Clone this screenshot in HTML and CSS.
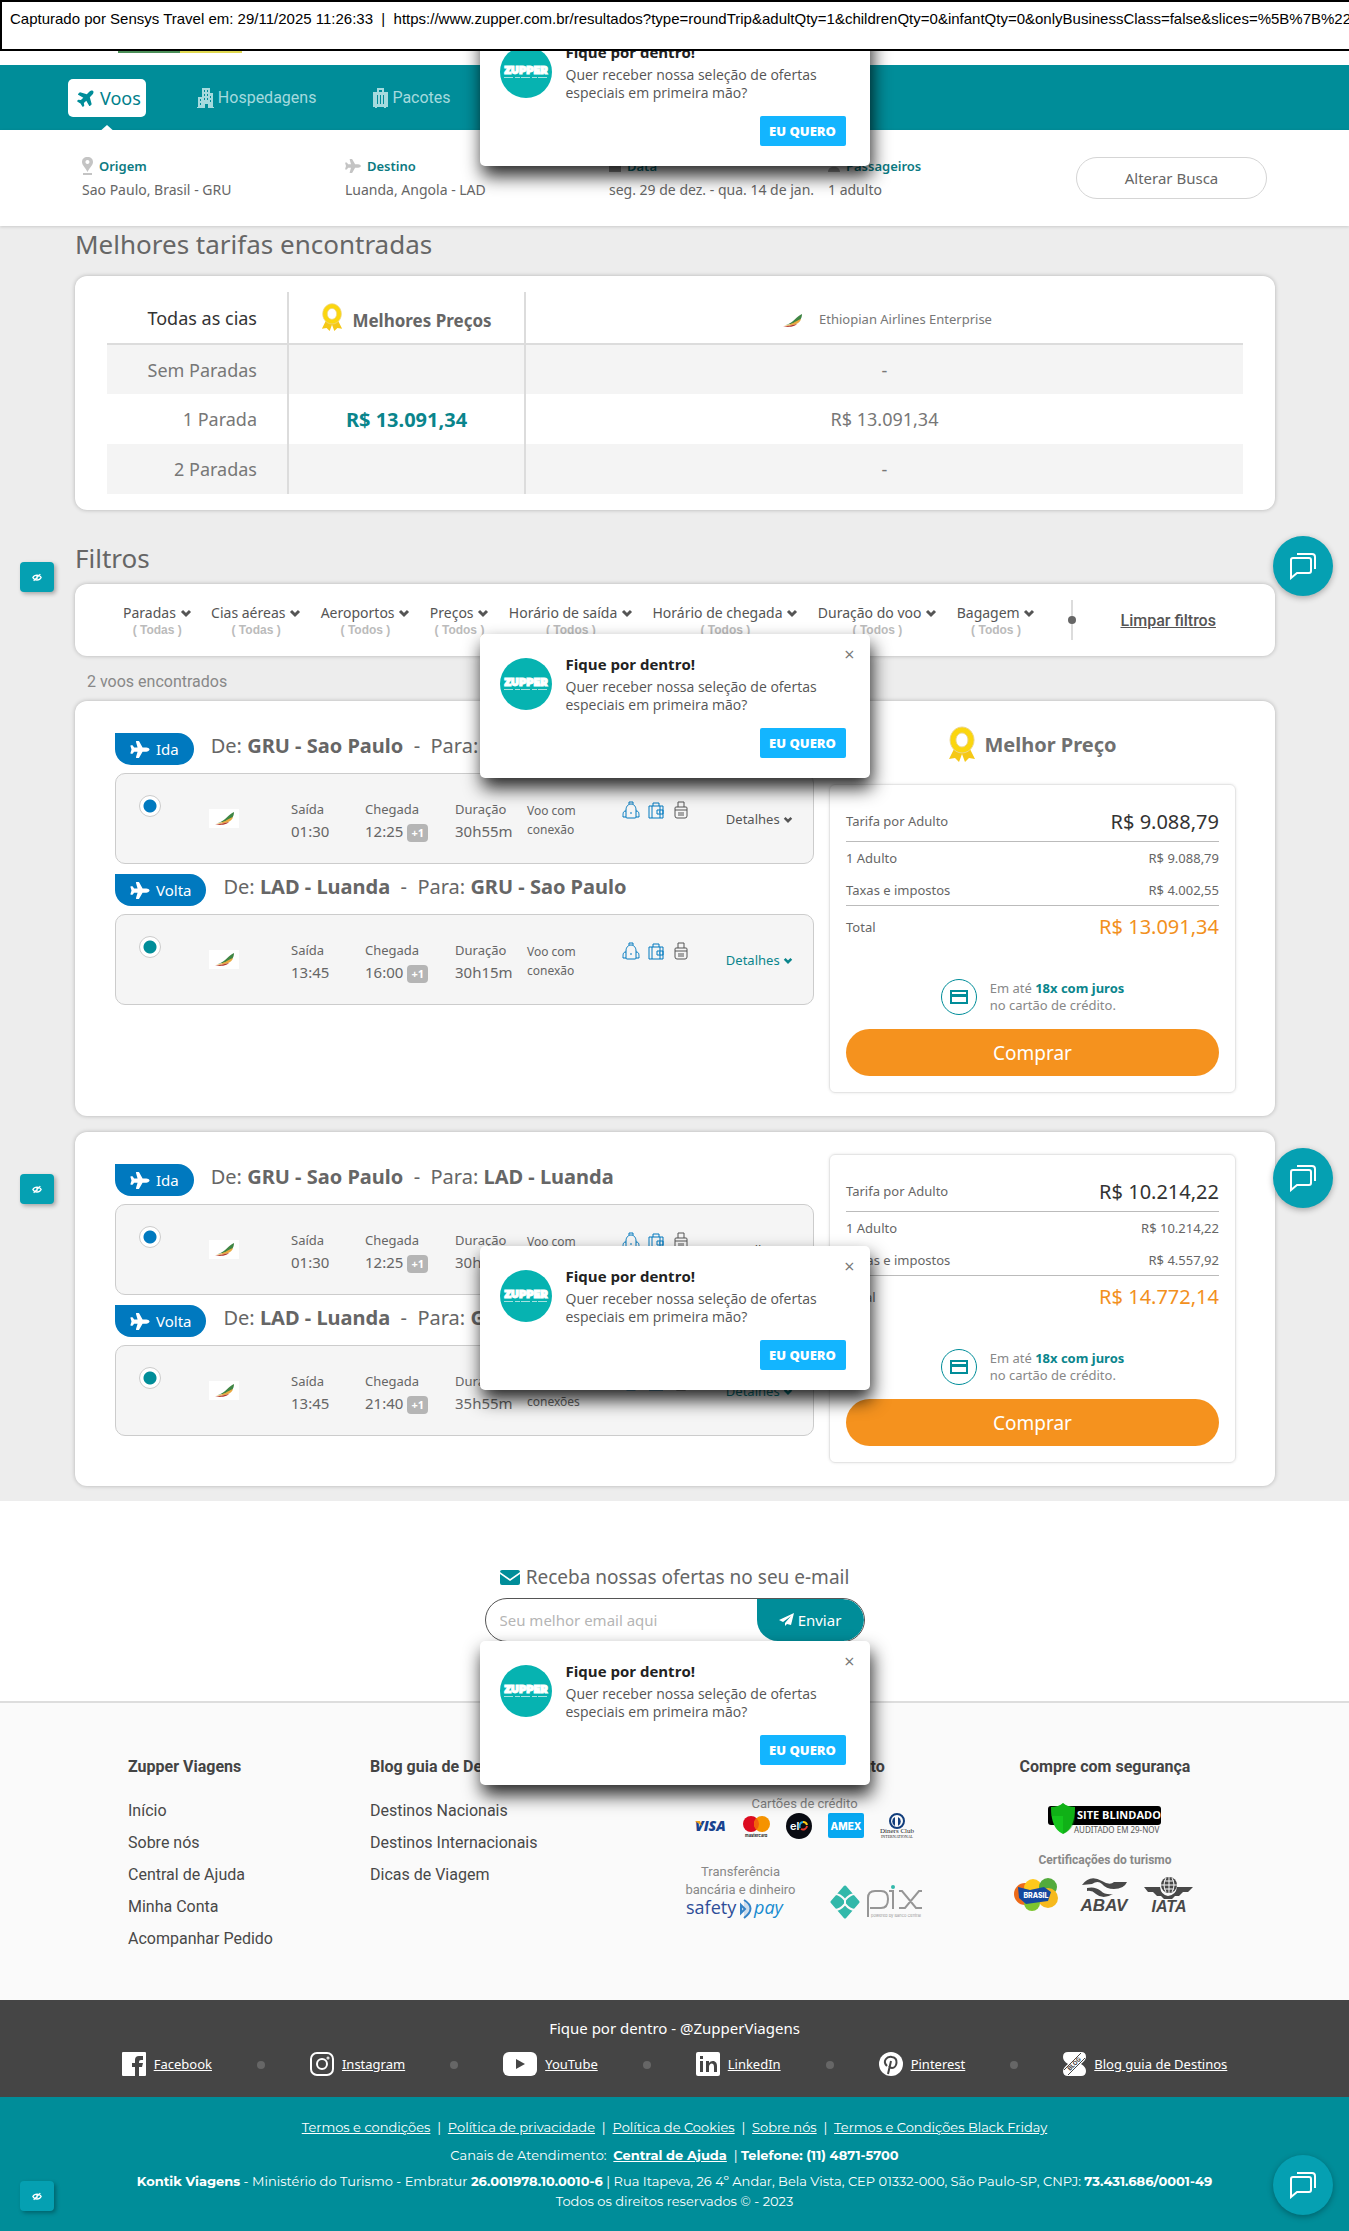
FILE: index.html
```
<!DOCTYPE html>
<html lang="pt-BR">

<head>
    <meta charset="utf-8">
    <title>Zupper Viagens - Resultados</title>
    <link rel="stylesheet" href="styles.css">
</head>

<body>
    <!-- shared icons -->
    <svg class="sprite" aria-hidden="true">
        <symbol id="plane" viewBox="0 0 576 512">
            <path d="M480 192H365.7L260.600 8.100A16 16 0 0 0 246.700 0h-65.500c-10.600 0-18.300 10.200-15.400 20.400L214.900 192H112l-43.200-57.600c-3-4-7.800-6.400-12.800-6.400H16C5.600 128-2 137.800.5 147.900L32 256 .5 364.100C-2 374.200 5.600 384 16 384h40c5 0 9.800-2.400 12.800-6.400L112 320h102.900l-49 171.600c-3 10.200 4.700 20.400 15.300 20.400h65.500c5.700 0 11-3.100 13.900-8.100L365.700 320H480c35.300 0 96-28.700 96-64s-60.700-64-96-64z" />
        </symbol>
        <symbol id="chevron" viewBox="0 0 12 9">
            <path d="M2 2l4 4 4-4" fill="none" stroke="currentColor" stroke-width="3" />
        </symbol>
        <symbol id="medal" viewBox="0 0 28 36">
            <path d="M6 23L1 33l6-1 4 4 3-8 3 8 4-4 6 1-5-10z" fill="#f5c816" />
            <path d="M14 1a12 13 0 1 0 .1 0zM14 7a6 7 0 1 1-.1 0z" fill="#fbd60e" fill-rule="evenodd" stroke="#ecd58a" />
        </symbol>
        <symbol id="tail" viewBox="0 0 30 19">
            <path fill="#fff" d="M0 0h30v19H0z" />
            <path d="M25 3c0 3-1 5-2 6C18 13 13 13 9 14c7-2 11-9 16-11z" fill="#3f8544" />
            <path d="M24 8c-1 5-9 7-17 7 7-1 12-5 17-7z" fill="#e9a840" />
            <path d="M20 13c-3 3-8 3-14 3 5-1 10-2 14-3z" fill="#b2362b" />
        </symbol>
        <symbol id="backpack" viewBox="0 0 18 18">
            <path d="M7 3V1h4v2M4 9c0-8 10-8 10 0v7q0 1-1 1H5q-1 0-1-1zM4 10c-3 0-3 2-3 6h3M14 10c3 0 3 2 3 6h-3M8 12h2" fill="none" stroke="currentColor" />
        </symbol>
        <symbol id="suitcase" viewBox="0 0 18 18">
            <path d="M2 5h14v12H2zM6 5V2h6v3M5 5v12M13 5v12M10 9h6v4h-6zM12 11h1" fill="none" stroke="currentColor" />
        </symbol>
        <symbol id="luggage" viewBox="0 0 18 18">
            <path d="M6 6V1h6v5M4 6h10q1 0 1 1v8q0 2-2 2H5q-2 0-2-2V7q0-1 1-1zM3 9h12M7 11v4M9 11v4M11 11v4" fill="none" stroke="currentColor" />
        </symbol>
        <symbol id="card" viewBox="0 0 18 14">
            <path d="M1 1h16v12H1z" fill="none" stroke="currentColor" stroke-width="2" />
            <path d="M1 4h16v3H1z" fill="currentColor" />
        </symbol>
        <symbol id="chat" viewBox="0 0 28 28">
            <path d="M2 8q0-2 2-2h16q2 0 2 2v11q0 2-2 2H8l-6 5zM8 2h15q3 0 3 3v12" fill="none" stroke="#fff" stroke-width="2" />
        </symbol>
        <symbol id="eye" viewBox="0 0 12 10">
            <path d="M1 5c2-4 8-4 10 0-2 4-8 4-10 0zM2 9l8-8M6 3v4" fill="none" stroke="#fff" stroke-width="1.500" />
        </symbol>
        <symbol id="zupper" viewBox="0 0 52 52">
            <circle cx="26" cy="26" r="26" fill="#06b3b1" />
            <text x="26" y="28" text-anchor="middle" font-family="Montserrat, Inter, sans-serif" font-weight="900" font-size="10" fill="#fff" stroke="#fff">ZUPPER</text>
            <path d="M4 31.500h44" stroke="#a5e2e0" stroke-dasharray="9 2 5 1" />
        </symbol>
    </svg>

    <div class="capture">Capturado por Sensys Travel em: 29/11/2025 11:26:33 &nbsp;|&nbsp; https://www.zupper.com.br/resultados?type=roundTrip&amp;adultQty=1&amp;childrenQty=0&amp;infantQty=0&amp;onlyBusinessClass=false&amp;slices=%5B%7B%22de</div>

    <header>
        <div class="logo-strip"><span></span></div>
        <nav>
            <a href="#" class="tab active">
                <svg class="plane-up" width="19" height="19"><use href="#plane" /></svg>Voos</a>
            <a href="#" class="tab">
                <svg width="17" height="20" viewBox="0 0 17 20" fill="currentColor">
                    <path fill-rule="evenodd" d="M5 0h8v5h3v14h1v1h-6v-4H8v4H0v-1h1V9h4zM7 2v2h1V2zM10 2v2h1V2zM7 6v2h1V6zM10 6v2h1V6zM7 10v2h1v-2zM10 10v2h1v-2zM13 8v2h1V8zM13 12v2h1v-2zM3 11v2h1v-2zM3 15v2h1v-2z" />
                </svg>Hospedagens</a>
            <a href="#" class="tab">
                <svg width="15" height="20" viewBox="0 0 15 20" fill="currentColor">
                    <path fill-rule="evenodd" d="M4 0h7v4h4v15h-2v1h-2v-1H4v1H2v-1H0V4h4zM6 2v2h3V2zM4 7v9h1V7zM7 7v9h1V7zM10 7v9h1V7z" />
                </svg>Pacotes</a>
        </nav>
        <section class="search">
            <div class="field">
                <h4><svg width="11" height="18" viewBox="0 0 11 18"><path fill="#c4c4c4" fill-rule="evenodd" d="M5.500 0C2 0 0 2 0 5c0 3 3 5 5.500 10C8 10 11 8 11 5c0-3-2-5-5.500-5zm0 3a2 2 0 1 1-.1 0zM1 16h9v2H1z" /></svg>Origem</h4>
                <p>Sao Paulo, Brasil - GRU</p>
            </div>
            <div class="field">
                <h4><svg width="16" height="14" fill="#c4c4c4"><use href="#plane" /></svg>Destino</h4>
                <p>Luanda, Angola - LAD</p>
            </div>
            <div class="field">
                <h4><svg width="12" height="12"><path fill="#999" d="M0 1h12v11H0z" /></svg>Data</h4>
                <p>seg. 29 de dez. - qua. 14 de jan.</p>
            </div>
            <div class="field">
                <h4><svg width="12" height="12"><path fill="#aaa" d="M0 12c0-7 12-7 12 0zM6 0a3 3 0 1 1-.1 0z" /></svg>Passageiros</h4>
                <p>1 adulto</p>
            </div>
            <button class="change">Alterar Busca</button>
        </section>
    </header>

    <main>
        <h2>Melhores tarifas encontradas</h2>
        <div class="panel fares">
            <table>
                <tr>
                    <th>Todas as cias</th>
                    <th class="best"><svg width="22" height="28"><use href="#medal" /></svg>Melhores Preços</th>
                    <th class="airline"><svg width="30" height="19"><use href="#tail" /></svg>Ethiopian Airlines Enterprise</th>
                </tr>
                <tr>
                    <td>Sem Paradas</td>
                    <td></td>
                    <td>-</td>
                </tr>
                <tr>
                    <td>1 Parada</td>
                    <td class="low">R$ 13.091,34</td>
                    <td>R$ 13.091,34</td>
                </tr>
                <tr>
                    <td>2 Paradas</td>
                    <td></td>
                    <td>-</td>
                </tr>
            </table>
        </div>

        <h2 class="filter-title">Filtros</h2>
        <div class="panel filters">
            <button class="filter"><span>Paradas <svg width="12" height="9"><use href="#chevron" /></svg></span><small>( Todas )</small></button>
            <button class="filter"><span>Cias aéreas <svg width="12" height="9"><use href="#chevron" /></svg></span><small>( Todas )</small></button>
            <button class="filter"><span>Aeroportos <svg width="12" height="9"><use href="#chevron" /></svg></span><small>( Todos )</small></button>
            <button class="filter"><span>Preços <svg width="12" height="9"><use href="#chevron" /></svg></span><small>( Todos )</small></button>
            <button class="filter"><span>Horário de saída <svg width="12" height="9"><use href="#chevron" /></svg></span><small>( Todos )</small></button>
            <button class="filter"><span>Horário de chegada <svg width="12" height="9"><use href="#chevron" /></svg></span><small>( Todos )</small></button>
            <button class="filter"><span>Duração do voo <svg width="12" height="9"><use href="#chevron" /></svg></span><small>( Todos )</small></button>
            <button class="filter"><span>Bagagem <svg width="12" height="9"><use href="#chevron" /></svg></span><small>( Todos )</small></button>
            <i class="divider"></i>
            <a href="#" class="clear">Limpar filtros</a>
        </div>
        <p class="count">2 voos encontrados</p>

        <article class="panel result first">
            <div class="legs">
                <div class="leg-title"><span class="badge"><svg width="20" height="17"><use href="#plane" /></svg>Ida</span>
                    <h3>De: <b>GRU - Sao Paulo</b> &nbsp;-&nbsp; Para: <b>LAD - Luanda</b></h3>
                </div>
                <div class="leg">
                    <input type="radio" name="ida1" aria-label="Selecionar ida" checked>
                    <svg class="tail" width="30" height="19"><use href="#tail" /></svg>
                    <div class="time dep"><span>Saída</span>01:30</div>
                    <div class="time arr"><span>Chegada</span>12:25 <em>+1</em></div>
                    <div class="time dur"><span>Duração</span>30h55m</div>
                    <p class="stops">Voo com<br>conexão</p>
                    <div class="bags"><svg><use href="#backpack" /></svg><svg><use href="#suitcase" /></svg><svg><use href="#luggage" /></svg></div>
                    <a href="#" class="details">Detalhes <svg width="10" height="8"><use href="#chevron" /></svg></a>
                </div>
                <div class="leg-title"><span class="badge"><svg width="20" height="17"><use href="#plane" /></svg>Volta</span>
                    <h3>De: <b>LAD - Luanda</b> &nbsp;-&nbsp; Para: <b>GRU - Sao Paulo</b></h3>
                </div>
                <div class="leg back">
                    <input type="radio" name="volta1" aria-label="Selecionar volta" checked>
                    <svg class="tail" width="30" height="19"><use href="#tail" /></svg>
                    <div class="time dep"><span>Saída</span>13:45</div>
                    <div class="time arr"><span>Chegada</span>16:00 <em>+1</em></div>
                    <div class="time dur"><span>Duração</span>30h15m</div>
                    <p class="stops">Voo com<br>conexão</p>
                    <div class="bags"><svg><use href="#backpack" /></svg><svg><use href="#suitcase" /></svg><svg><use href="#luggage" /></svg></div>
                    <a href="#" class="details">Detalhes <svg width="10" height="8"><use href="#chevron" /></svg></a>
                </div>
            </div>
            <aside>
                <h3 class="best-price"><svg width="28" height="36"><use href="#medal" /></svg>Melhor Preço</h3>
                <div class="price">
                    <dl>
                        <div class="big line"><dt>Tarifa por Adulto</dt><dd>R$ 9.088,79</dd></div>
                        <div><dt>1 Adulto</dt><dd>R$ 9.088,79</dd></div>
                        <div class="line"><dt>Taxas e impostos</dt><dd>R$ 4.002,55</dd></div>
                        <div class="big total"><dt>Total</dt><dd>R$ 13.091,34</dd></div>
                    </dl>
                    <div class="credit"><span class="ring"><svg width="18" height="14"><use href="#card" /></svg></span>
                        <p>Em até <b>18x com juros</b><br>no cartão de crédito.</p>
                    </div>
                    <button class="buy">Comprar</button>
                </div>
            </aside>
        </article>

        <article class="panel result">
            <div class="legs">
                <div class="leg-title"><span class="badge"><svg width="20" height="17"><use href="#plane" /></svg>Ida</span>
                    <h3>De: <b>GRU - Sao Paulo</b> &nbsp;-&nbsp; Para: <b>LAD - Luanda</b></h3>
                </div>
                <div class="leg">
                    <input type="radio" name="ida2" aria-label="Selecionar ida" checked>
                    <svg class="tail" width="30" height="19"><use href="#tail" /></svg>
                    <div class="time dep"><span>Saída</span>01:30</div>
                    <div class="time arr"><span>Chegada</span>12:25 <em>+1</em></div>
                    <div class="time dur"><span>Duração</span>30h55m</div>
                    <p class="stops">Voo com<br>conexão</p>
                    <div class="bags"><svg><use href="#backpack" /></svg><svg><use href="#suitcase" /></svg><svg><use href="#luggage" /></svg></div>
                    <a href="#" class="details">Detalhes <svg width="10" height="8"><use href="#chevron" /></svg></a>
                </div>
                <div class="leg-title"><span class="badge"><svg width="20" height="17"><use href="#plane" /></svg>Volta</span>
                    <h3>De: <b>LAD - Luanda</b> &nbsp;-&nbsp; Para: <b>GRU - Sao Paulo</b></h3>
                </div>
                <div class="leg back">
                    <input type="radio" name="volta2" aria-label="Selecionar volta" checked>
                    <svg class="tail" width="30" height="19"><use href="#tail" /></svg>
                    <div class="time dep"><span>Saída</span>13:45</div>
                    <div class="time arr"><span>Chegada</span>21:40 <em>+1</em></div>
                    <div class="time dur"><span>Duração</span>35h55m</div>
                    <p class="stops">Voo com<br>conexões</p>
                    <div class="bags"><svg><use href="#backpack" /></svg><svg><use href="#suitcase" /></svg><svg><use href="#luggage" /></svg></div>
                    <a href="#" class="details">Detalhes <svg width="10" height="8"><use href="#chevron" /></svg></a>
                </div>
            </div>
            <aside>
                <div class="price">
                    <dl>
                        <div class="big line"><dt>Tarifa por Adulto</dt><dd>R$ 10.214,22</dd></div>
                        <div><dt>1 Adulto</dt><dd>R$ 10.214,22</dd></div>
                        <div class="line"><dt>Taxas e impostos</dt><dd>R$ 4.557,92</dd></div>
                        <div class="big total"><dt>Total</dt><dd>R$ 14.772,14</dd></div>
                    </dl>
                    <div class="credit"><span class="ring"><svg width="18" height="14"><use href="#card" /></svg></span>
                        <p>Em até <b>18x com juros</b><br>no cartão de crédito.</p>
                    </div>
                    <button class="buy">Comprar</button>
                </div>
            </aside>
        </article>
    </main>

    <section class="newsletter">
        <label for="email"><svg width="20" height="15" viewBox="0 0 20 15"><path fill="#008d99" d="M2 0h16q2 0 2 2l-10 7L0 2q0-2 2-2zM0 4l10 7 10-7v9q0 2-2 2H2q-2 0-2-2z" /></svg>Receba nossas ofertas no seu e-mail</label>
        <form>
            <input type="email" id="email" placeholder="Seu melhor email aqui">
            <button type="button"><svg width="15" height="13" viewBox="0 0 15 13"><path fill="#fff" d="M15 0L0 7l4 2 8-6-6 7v3l2-2 4 1z" /></svg>Enviar</button>
        </form>
    </section>

    <footer>
        <section class="links">
            <div class="col about">
                <h5>Zupper Viagens</h5>
                <a href="#">Início</a>
                <a href="#">Sobre nós</a>
                <a href="#">Central de Ajuda</a>
                <a href="#">Minha Conta</a>
                <a href="#">Acompanhar Pedido</a>
            </div>
            <div class="col blog">
                <h5>Blog guia de Destinos</h5>
                <a href="#">Destinos Nacionais</a>
                <a href="#">Destinos Internacionais</a>
                <a href="#">Dicas de Viagem</a>
            </div>
            <div class="col pay">
                <h5>Formas de pagamento</h5>
                <p>Cartões de crédito</p>
                <svg width="220" height="26" viewBox="0 0 220 26">
                    <text x="0" y="18" font-family="Open Sans" font-weight="800" font-style="italic" font-size="14" fill="#17428f">VISA</text>
                    <path d="M0 8h5l2 5z" fill="#f3a51c" />
                    <circle cx="56" cy="11" r="8" fill="#dc0b20" />
                    <circle cx="67" cy="11" r="8" fill="#f59300" />
                    <path d="M61.500 5q5 6 0 12-5-6 0-12" fill="#f2600c" />
                    <text x="50" y="24" font-family="Inter" font-weight="700" font-size="4" fill="#222">mastercard</text>
                    <circle cx="104" cy="13" r="13" fill="#090b12" />
                    <text x="95" y="17" font-family="Inter" font-weight="600" font-size="11" fill="#fff">el</text>
                    <path d="M105 15a4 4 0 0 1 3-6" fill="none" stroke="#24a5dc" stroke-width="2" />
                    <path d="M108 9a4 4 0 0 1 4 3" fill="none" stroke="#ffcd16" stroke-width="2" />
                    <path d="M112 13a4 4 0 0 1-6 3" fill="none" stroke="#e63b2d" stroke-width="2" />
                    <rect x="133" width="36" height="25" rx="2" fill="#08a8f1" />
                    <text x="151" y="17" text-anchor="middle" font-family="Inter" font-weight="800" font-size="10" fill="#fff">AMEX</text>
                    <circle cx="202" cy="8" r="7" fill="none" stroke="#123e7c" stroke-width="2" />
                    <path d="M200 4v9a5 5 0 0 1 0-9M203 4a5 5 0 0 1 0 9z" fill="#123e7c" />
                    <text x="202" y="20" text-anchor="middle" font-family="Liberation Serif" font-size="7" fill="#222">Diners Club</text>
                    <text x="202" y="25" text-anchor="middle" font-family="Liberation Serif" font-size="4" fill="#222">INTERNATIONAL</text>
                </svg>
                <div class="transfer">
                    <div>
                        <p>Transferência<br>bancária e dinheiro</p>
                        <svg width="100" height="20" viewBox="0 0 100 20">
                            <text x="0" y="15" font-family="Open Sans" font-size="18" fill="#2e4d98">safety</text>
                            <path d="M55 6l4 4-4 4zM58 1q13 8 0 18" fill="#2468b5" stroke="#3483c7" stroke-width="2" fill-opacity=".2" />
                            <text x="68" y="15" font-family="Open Sans" font-style="italic" font-size="18" fill="#168bd0">pay</text>
                        </svg>
                    </div>
                    <svg width="94" height="34" viewBox="0 0 94 34">
                        <path d="M15 2l13 15-13 15L2 17z" fill="#32b8aa" stroke="#32b8aa" stroke-width="3" stroke-linejoin="round" />
                        <path d="M5 9q5 0 10 6 5-6 10-6M5 25q5 0 10-6 5 6 10 6M15 15v4" fill="none" stroke="#fafafa" stroke-width="2" />
                        <path d="M38 32V13q0-7 7-7h6q7 0 7 8 0 9-7 9H40M59 6h4v18M69 6h3l14 17h6M92 6h-3L75 23h-6" fill="none" stroke="#969696" stroke-width="2" />
                        <circle cx="63" cy="2" r="2" fill="#32b8aa" />
                        <text x="41" y="32" font-family="Inter" font-size="4" fill="#999">powered by Banco Central</text>
                    </svg>
                </div>
            </div>
            <div class="col safe">
                <h5>Compre com segurança</h5>
                <svg width="114" height="32" viewBox="0 0 114 32">
                    <rect y="3" width="113" height="19" rx="3" />
                    <path d="M3 4q8 0 12-4 4 4 12 4 0 22-12 27Q3 26 3 4z" fill="#15c51d" />
                    <path d="M15 0q4 4 12 4v9H3V4q8 0 12-4zM15 13v18Q27 26 27 13z" fill="#0a930e" fill-opacity=".4" />
                    <text x="29" y="16" font-family="Open Sans" font-weight="700" font-size="11" fill="#fff">SITE BLINDADO</text>
                    <text x="26" y="30" font-family="Noto Sans" font-size="8" fill="#555">AUDITADO EM 29-NOV</text>
                </svg>
                <p><b>Certificações do turismo</b></p>
                <svg width="184" height="36" viewBox="0 0 184 36">
                    <circle cx="12" cy="17" r="11" fill="#ed6b19" />
                    <circle cx="20" cy="11" r="9" fill="#ffc91c" />
                    <circle cx="35" cy="10" r="9" fill="#53ab3c" />
                    <circle cx="35" cy="21" r="10" fill="#f6b91d" />
                    <circle cx="19" cy="26" r="8" fill="#7dc52f" />
                    <path d="M5 10l12 3 14-3 7 5-3 9-22 3-7-6z" fill="#15499f" />
                    <text x="23" y="21" text-anchor="middle" font-family="Inter" font-weight="800" font-size="7" fill="#fff">BRASIL</text>
                    <path d="M69 8q8-11 20-4 8 5 12 1h13q-3 7-13 7-8 0-12-5-4-4-10 0zM74 11q8-2 14 3 4 4 12 3-10 6-17 0-4-4-9-3z" fill="#484848" />
                    <text x="91" y="34" text-anchor="middle" font-family="Liberation Sans" font-weight="700" font-style="italic" font-size="17" fill="#484848">ABAV</text>
                    <path d="M131 10h16q1 8 8 9 8-1 9-9h16l-5 5h-5l-4 4h-4l-3 3h-8l-3-3h-4l-4-4h-5z" fill="#484848" />
                    <circle cx="156" cy="8" r="8" fill="#484848" />
                    <path d="M148 8h16M156 0v16M151 4h10M151 12h10M153 1q-4 7 0 14M159 1q4 7 0 14" stroke="#fafafa" fill="none" />
                    <text x="156" y="35" text-anchor="middle" font-family="Liberation Sans" font-weight="700" font-style="italic" font-size="16" fill="#484848">IATA</text>
                </svg>
            </div>
        </section>

        <section class="social">
            <p>Fique por dentro - @ZupperViagens</p>
            <ul>
                <li><svg width="24" height="24" viewBox="0 0 24 24"><rect width="24" height="24" rx="1" fill="#fff" /><path d="M13 24v-9h-3v-4h3V8q0-4 4-4h4v4h-2q-2 0-2 2v1h4l-1 4h-3v9z" fill="#454545" /></svg><a href="#">Facebook</a></li>
                <li><svg width="24" height="24" viewBox="0 0 24 24" fill="none" stroke="#fff" stroke-width="2"><rect x="1" y="1" width="22" height="22" rx="6" /><circle cx="12" cy="12" r="5" /><circle cx="18" cy="6" r=".5" /></svg><a href="#">Instagram</a></li>
                <li><svg width="34" height="24" viewBox="0 0 34 24"><rect width="34" height="24" rx="6" fill="#fff" /><path d="M13 7l9 5-9 5z" fill="#454545" /></svg><a href="#">YouTube</a></li>
                <li><svg width="24" height="24" viewBox="0 0 24 24"><rect width="24" height="24" rx="2" fill="#fff" /><path d="M4 9h3v11H4zM4 4h3v3H4zM10 9h3v2c2-3 8-3 8 3v6h-3v-5c0-5-5-4-5 0v5h-3z" fill="#454545" /></svg><a href="#">LinkedIn</a></li>
                <li><svg width="24" height="24" viewBox="0 0 24 24"><circle cx="12" cy="12" r="12" fill="#fff" /><path d="M8 14c-5-5 0-10 5-9 7 1 5 11 0 11-2 0-3-2-3-2M12 9L9 22" fill="none" stroke="#454545" stroke-width="2" /></svg><a href="#">Pinterest</a></li>
                <li><svg width="23" height="24" viewBox="0 0 23 24"><path d="M5 0h13q5 0 5 5 0 3-5 7 5 3 5 7 0 5-5 5H5q-5 0-5-5 0-3 5-7-5-3-5-7 0-5 5-5z" fill="#fff" /><path d="M1 18L18 1M5 23L22 6" stroke="#454545" /><text x="7" y="19" transform="rotate(-45 7 19)" font-family="Inter" font-weight="700" font-size="6" fill="#454545">BLOG</text></svg><a href="#">Blog guia de Destinos</a></li>
            </ul>
        </section>

        <section class="legal">
            <p><a href="#">Termos e condições</a> &nbsp;|&nbsp; <a href="#">Política de privacidade</a> &nbsp;|&nbsp; <a href="#">Política de Cookies</a> &nbsp;|&nbsp; <a href="#">Sobre nós</a> &nbsp;|&nbsp; <a href="#">Termos e Condições Black Friday</a></p>
            <p>Canais de Atendimento: &nbsp;<a href="#"><b>Central de Ajuda</b></a> &nbsp;| <b>Telefone: (11) 4871-5700</b></p>
            <p class="company"><b>Kontik Viagens</b> - Ministério do Turismo - Embratur <b>26.001978.10.0010-6</b> | Rua Itapeva, 26 4º Andar, Bela Vista, CEP 01332-000, São Paulo-SP, CNPJ: <b>73.431.686/0001-49</b><br>Todos os direitos reservados © - 2023</p>
        </section>
    </footer>

    <!-- floating widgets -->
    <div class="popup one">
        <svg width="52" height="52"><use href="#zupper" /></svg>
        <div class="msg"><strong>Fique por dentro!</strong><p>Quer receber nossa seleção de ofertas especiais em primeira mão?</p><button class="want">EU QUERO</button></div>
        <button class="close" aria-label="Fechar">×</button>
    </div>
    <div class="popup two">
        <svg width="52" height="52"><use href="#zupper" /></svg>
        <div class="msg"><strong>Fique por dentro!</strong><p>Quer receber nossa seleção de ofertas especiais em primeira mão?</p><button class="want">EU QUERO</button></div>
        <button class="close" aria-label="Fechar">×</button>
    </div>
    <div class="popup three">
        <svg width="52" height="52"><use href="#zupper" /></svg>
        <div class="msg"><strong>Fique por dentro!</strong><p>Quer receber nossa seleção de ofertas especiais em primeira mão?</p><button class="want">EU QUERO</button></div>
        <button class="close" aria-label="Fechar">×</button>
    </div>
    <div class="popup four">
        <svg width="52" height="52"><use href="#zupper" /></svg>
        <div class="msg"><strong>Fique por dentro!</strong><p>Quer receber nossa seleção de ofertas especiais em primeira mão?</p><button class="want">EU QUERO</button></div>
        <button class="close" aria-label="Fechar">×</button>
    </div>

    <button class="access two" aria-label="Acessibilidade"><svg width="10" height="9"><use href="#eye" /></svg></button>
    <button class="access three" aria-label="Acessibilidade"><svg width="10" height="9"><use href="#eye" /></svg></button>
    <button class="access four" aria-label="Acessibilidade"><svg width="10" height="9"><use href="#eye" /></svg></button>
    <button class="chat two" aria-label="Chat"><svg width="28" height="28"><use href="#chat" /></svg></button>
    <button class="chat three" aria-label="Chat"><svg width="28" height="28"><use href="#chat" /></svg></button>
    <button class="chat four" aria-label="Chat"><svg width="28" height="28"><use href="#chat" /></svg></button>
</body>

</html>
```
FILE: styles.css
```
* {
    box-sizing: border-box;
}

body {
    margin: 0;
    position: relative;
    font-family: "Segoe UI", "Noto Sans", sans-serif;
    font-size: 13px;
    color: #666;
    background-color: #fff;
}

h2, h3, h4, h5, p, ul, dl, dd {
    margin: 0;
    padding: 0;
    font-weight: 400;
}

button {
    font-family: inherit;
    cursor: pointer;
}

.sprite {
    position: absolute;
    width: 0;
    height: 0;
}

.capture {
    position: relative;
    z-index: 20;
    height: 51px;
    padding: 9px 8px;
    border: 2px solid #000;
    border-right: 0;
    background-color: #fff;
    color: #000;
    font-family: "Liberation Sans", Arial, sans-serif;
    font-size: 15px;
    line-height: 16px;
    white-space: nowrap;
    overflow: hidden;
}

/* Header */
.logo-strip {
    height: 14px;
    padding-left: 118px;
}

.logo-strip span {
    display: block;
    width: 124px;
    height: 2px;
    background: linear-gradient(90deg, #4b8f58 50%, #e0d850 50%);
}

nav {
    display: flex;
    align-items: center;
    gap: 45px;
    height: 65px;
    padding-left: 68px;
    background-color: #008d99;
}

.tab {
    position: relative;
    display: flex;
    align-items: center;
    gap: 4px;
    height: 38px;
    padding: 0 6px;
    border-radius: 5px;
    color: #a5dade;
    font-family: Roboto, sans-serif;
    font-size: 16px;
    text-decoration: none;
}

.tab.active {
    background-color: #fff;
    color: #00808b;
    font-family: "Segoe UI", "Noto Sans", sans-serif;
    font-size: 18px;
    padding: 0 5px 0 9px;
}

.tab.active::after {
    content: "";
    position: absolute;
    left: 30px;
    top: 46px;
    border: 9px solid transparent;
    border-top: 0;
    border-bottom: 8px solid #fff;
}

.plane-up {
    transform: rotate(-45deg);
    fill: #008d99;
}

.search {
    display: grid;
    grid-template-columns: 263px 264px 219px 1fr 191px;
    align-items: center;
    height: 96px;
    padding: 0 82px;
    box-shadow: 0 1px 3px rgba(0, 0, 0, .15);
    position: relative;
}

.field h4 {
    display: flex;
    align-items: center;
    gap: 6px;
    height: 24px;
    color: #0b7a82;
    font-size: 13px;
    font-weight: 600;
}

.field p {
    font-size: 14px;
    line-height: 24px;
    white-space: nowrap;
}

.change {
    height: 42px;
    border: 1px solid #d5d5d5;
    border-radius: 21px;
    background-color: #fff;
    color: #666;
    font-size: 15px;
}

/* Results */
main {
    padding: 0 74px 15px 75px;
    background-color: #ededed;
}

h2 {
    padding-bottom: 14px;
    font-size: 26px;
    line-height: 36px;
}

.panel {
    border-radius: 12px;
    background-color: #fff;
    box-shadow: 0 0 4px rgba(0, 0, 0, .25);
}

.fares {
    padding: 16px 32px;
}

.fares table {
    width: 100%;
    border-collapse: collapse;
    table-layout: fixed;
    font-size: 18px;
}

.fares th, .fares td {
    height: 50px;
    padding: 0;
    border-left: 2px solid #dcdcdc;
    text-align: center;
    font-weight: 400;
    color: #777;
}

.fares th {
    height: 52px;
    border-bottom: 2px solid #dcdcdc;
    color: #333;
}

.fares tr:nth-child(even) {
    background-color: #f4f4f4;
}

.fares th:first-child, .fares td:first-child {
    width: 181px;
    padding-right: 30px;
    border-left: 0;
    text-align: right;
}

.fares th.best {
    width: 237px;
    font-size: 17px;
    font-weight: 700;
    color: #666;
}

.best svg {
    margin-right: 9px;
    vertical-align: -4px;
}

.fares th.airline {
    padding-top: 5px;
    color: #777;
    font-size: 13px;
}

.airline svg {
    margin-right: 12px;
    vertical-align: middle;
}

.fares td.low {
    color: #0a858c;
    font-size: 20px;
    font-weight: 700;
}

.filter-title {
    padding: 30px 0 8px;
}

.filters {
    display: flex;
    align-items: center;
    justify-content: space-between;
    height: 72px;
    padding: 0 59px 0 48px;
}

.filter {
    padding: 0;
    border: 0;
    background: none;
    color: #555;
    font-size: 14px;
    line-height: 20px;
    text-align: center;
    white-space: nowrap;
}

.filter span, .filter small {
    display: block;
}

.filter small {
    color: #bbb;
    font-family: "Liberation Sans", Arial, sans-serif;
    font-size: 12px;
    font-weight: 700;
    line-height: 14px;
}

.divider {
    position: relative;
    width: 2px;
    height: 40px;
    margin-left: 16px;
    background-color: #dcdcdc;
}

.divider::after {
    content: "";
    position: absolute;
    left: -3px;
    top: 16px;
    width: 8px;
    height: 8px;
    border-radius: 50%;
    background-color: #666;
}

.clear {
    margin-left: 28px;
    color: #555;
    font-family: Roboto, sans-serif;
    font-size: 16px;
    font-weight: 500;
}

.count {
    padding: 13px 12px 7px;
    color: #888;
    font-family: Roboto, sans-serif;
    font-size: 16px;
    line-height: 25px;
}

.result {
    display: flex;
    gap: 15px;
    padding: 22px 39px 23px 40px;
    margin-bottom: 16px;
}

.result:last-child {
    margin-bottom: 0;
}

.legs {
    flex: 1;
    padding-top: 10px;
}

.leg-title {
    display: flex;
    align-items: flex-start;
    gap: 17px;
}

.badge {
    display: flex;
    align-items: center;
    gap: 6px;
    height: 32px;
    padding: 0 15px;
    border-radius: 0 16px 16px 16px;
    background-color: #0079bf;
    color: #fff;
    fill: #fff;
    font-size: 15px;
}

.leg-title h3 {
    font-size: 20px;
    line-height: 26px;
    white-space: nowrap;
}

.leg {
    display: flex;
    align-items: flex-start;
    height: 91px;
    margin: 8px 0 10px;
    padding: 21px 20px 0 23px;
    border: 1px solid #ccc;
    border-radius: 10px;
    background-color: #f5f5f5;
}

.leg input {
    appearance: none;
    width: 22px;
    height: 22px;
    margin: 0 48px 0 0;
    border: 1px solid #ccc;
    border-radius: 50%;
    background: radial-gradient(circle, #0079bf 6px, #fff 7px);
}

.leg.back input {
    background: radial-gradient(circle, #008d99 6px, #fff 7px);
}

.tail {
    margin: 14px 52px 0 0;
}

.time {
    padding-top: 2px;
    font-size: 15px;
    line-height: 20px;
    white-space: nowrap;
}

.time span {
    display: block;
    font-size: 13px;
    line-height: 24px;
}

.dep {
    width: 74px;
}

.arr {
    width: 90px;
}

.dur {
    width: 72px;
}

.time em {
    display: inline-block;
    width: 21px;
    height: 18px;
    border-radius: 4px;
    background-color: #b5b5b5;
    color: #fff;
    font: 700 11px/18px "Segoe UI", "Noto Sans", sans-serif;
    text-align: center;
    vertical-align: middle;
}

.stops {
    width: 95px;
    padding-top: 6px;
    font-size: 12px;
    line-height: 19px;
}

.bags {
    display: flex;
    gap: 7px;
    padding-top: 6px;
    color: #0079bf;
}

.bags svg {
    width: 18px;
    height: 18px;
}

.bags svg:last-child {
    color: #555;
}

.details {
    margin: 15px 0 0 auto;
    color: #555;
    font-size: 13px;
    line-height: 19px;
    text-decoration: none;
}

.back .details {
    color: #0a858c;
}

aside {
    width: 407px;
}

.best-price {
    display: flex;
    align-items: center;
    justify-content: center;
    gap: 8px;
    height: 42px;
    margin-bottom: 19px;
    color: #707070;
    font-size: 20px;
    font-weight: 700;
}

.price {
    padding: 16px;
    border: 1px solid #e5e5e5;
    border-radius: 6px;
    box-shadow: 0 0 3px rgba(0, 0, 0, .1);
}

dl > div {
    display: flex;
    align-items: center;
    justify-content: space-between;
    height: 32px;
}

dl .big {
    height: 41px;
}

dl .line {
    border-bottom: 1px solid #bbb;
}

.big dd {
    color: #333;
    font-size: 20px;
}

dl .total dd {
    color: #f2901d;
}

.credit {
    display: flex;
    align-items: center;
    justify-content: center;
    gap: 13px;
    height: 36px;
    margin: 32px 0 14px;
    color: #888;
    line-height: 17px;
}

.credit b {
    color: #0a858c;
}

.ring {
    display: flex;
    align-items: center;
    justify-content: center;
    width: 36px;
    height: 36px;
    border: 1px solid #008d99;
    border-radius: 50%;
    color: #008d99;
}

.buy {
    display: block;
    width: 100%;
    height: 47px;
    border: 0;
    border-radius: 24px;
    background-color: #f5921e;
    color: #fff;
    font-size: 19px;
}

/* Newsletter */
.newsletter {
    display: flex;
    flex-direction: column;
    align-items: center;
    height: 202px;
    padding-top: 61px;
    border-bottom: 2px solid #ddd;
}

.newsletter label {
    display: flex;
    align-items: center;
    gap: 6px;
    height: 30px;
    margin-bottom: 6px;
    font-size: 19px;
}

.newsletter form {
    display: flex;
    width: 380px;
    height: 44px;
    border: 1px solid #555;
    border-radius: 22px;
    overflow: hidden;
}

.newsletter input {
    flex: 1;
    min-width: 0;
    padding: 0 14px;
    border: 0;
    background: none;
    font-family: inherit;
    font-size: 15px;
}

.newsletter input::placeholder {
    color: #b5b5b5;
}

.newsletter button {
    width: 107px;
    border: 0;
    border-radius: 0 22px 22px 22px;
    background-color: #008d99;
    color: #fff;
    font-size: 15px;
}

.newsletter button svg {
    margin-right: 4px;
}

/* Footer */
.links {
    display: grid;
    grid-template-columns: 242px 311px 247px 1fr;
    height: 297px;
    padding: 52px 67px 0 128px;
    background-color: #fafafa;
    font-family: Roboto, sans-serif;
}

.col h5 {
    margin-bottom: 16px;
    color: #444;
    font-size: 16px;
    font-weight: 700;
    line-height: 24px;
    white-space: nowrap;
}

.about a, .blog a {
    display: block;
    color: #484848;
    font-size: 16px;
    line-height: 32px;
    text-decoration: none;
}

.pay, .safe {
    display: flex;
    flex-direction: column;
    align-items: center;
    color: #888;
    line-height: 18px;
}

.pay, .safe p {
    text-align: center;
}

.transfer {
    display: flex;
    align-items: flex-end;
    gap: 34px;
    margin-top: 24px;
}

.transfer svg {
    display: block;
}

.safe h5 {
    margin-bottom: 24px;
}

.safe p {
    margin: 16px 0 8px;
    font-size: 12px;
}

.social {
    height: 97px;
    padding-top: 16px;
    background-color: #454545;
    color: #fff;
    text-align: center;
}

.social p {
    font-size: 15px;
    line-height: 24px;
}

.social ul {
    display: flex;
    justify-content: center;
    margin-top: 12px;
    list-style: none;
}

.social li {
    display: flex;
    align-items: center;
    gap: 8px;
    position: relative;
    padding: 0 49px;
}

.social li + li::before {
    content: "";
    position: absolute;
    left: -4px;
    top: 9px;
    width: 8px;
    height: 8px;
    border-radius: 50%;
    background-color: #666;
}

.social a, .legal a {
    color: #fff;
}

.legal {
    padding: 16px 20px 20px;
    background-color: #008d99;
    color: #fff;
    font-family: Montserrat, Inter, sans-serif;
    font-size: 13px;
    line-height: 28px;
    text-align: center;
}

.legal .company {
    padding-top: 2px;
    line-height: 20px;
}

/* Floating widgets */
.popup {
    position: absolute;
    left: calc(50% - 195px);
    display: flex;
    gap: 14px;
    width: 390px;
    height: 144px;
    padding: 20px 24px 20px 20px;
    border-radius: 5px;
    background-color: #fff;
    box-shadow: 2px 10px 18px rgba(0, 0, 0, .85);
    color: #555;
    font-family: "Open Sans", sans-serif;
}

.popup > svg {
    flex: none;
    margin-top: 4px;
}

.msg {
    display: flex;
    flex: 1;
    flex-direction: column;
    font-size: 14px;
    line-height: 18px;
}

.msg strong {
    color: #222;
    font-size: 15px;
    line-height: 20px;
    margin-bottom: 4px;
}

.want {
    align-self: flex-end;
    width: 86px;
    height: 30px;
    margin-top: 14px;
    padding: 0;
    border: 0;
    border-radius: 2px;
    background-color: #13b5ff;
    color: #fff;
    font-size: 13px;
    font-weight: 800;
}

.close {
    position: absolute;
    top: 10px;
    right: 15px;
    padding: 0;
    border: 0;
    background: none;
    color: #777;
    font-size: 18px;
    line-height: 20px;
}

.access, .chat {
    position: absolute;
    display: flex;
    align-items: center;
    justify-content: center;
    padding: 0;
    border: 0;
    background-color: #05a0b2;
}

.access {
    left: 20px;
    width: 34px;
    height: 30px;
    border-radius: 4px;
    box-shadow: 2px 2px 4px rgba(0, 0, 0, .3);
}

.chat {
    right: 16px;
    width: 60px;
    height: 60px;
    border-radius: 50%;
    box-shadow: 0 2px 6px rgba(0, 0, 0, .3);
}

.popup.one { top: 22px; }
.popup.two { top: 634px; }
.popup.three { top: 1246px; }
.popup.four { top: 1641px; }

.access.two { top: 562px; }
.access.three { top: 1174px; }
.access.four { top: 2181px; }

.chat.two { top: 536px; }
.chat.three { top: 1148px; }
.chat.four { top: 2155px; }
```
